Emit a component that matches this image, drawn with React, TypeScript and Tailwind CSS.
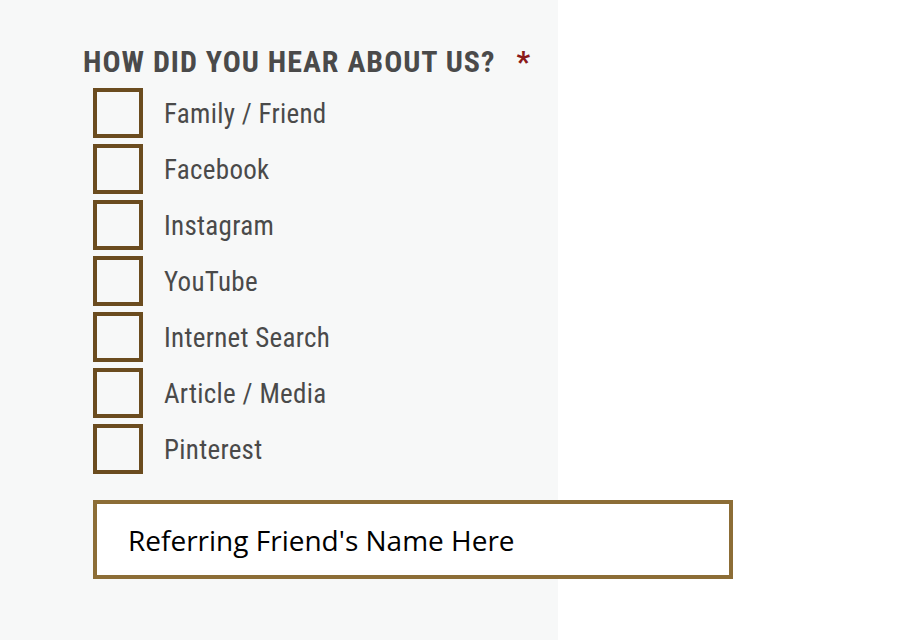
import React from "react";

const options = [
  "Family / Friend",
  "Facebook",
  "Instagram",
  "YouTube",
  "Internet Search",
  "Article / Media",
  "Pinterest",
];

export default function App() {
  return (
    <div className="flex h-[640px] w-[906px] bg-white">
      <div className="flex w-[558px] flex-col bg-[#f7f8f8] pl-[83px] pt-[44px]">
        <div
          className="flex items-center text-[30px] font-bold uppercase leading-[36px] tracking-[1px] text-[#4a4a4a] [font-stretch:75%]"
          style={{ fontFamily: '"Roboto Condensed", Roboto, sans-serif' }}
        >
          <span>How did you hear about us?</span>
          <span className="ml-[21px] text-[#8b1a1a]">*</span>
        </div>
        <div className="ml-[10px] mt-[8px] flex flex-col gap-[6px]">
          {options.map((o) => (
            <label key={o} className="flex items-center">
              <span className="box-border h-[50px] w-[50px] border-4 border-[#6b4c1f]" />
              <span
                className="ml-[21px] mt-[2px] text-[27px] tracking-[0.3px] text-[#4a4a4a] [font-stretch:75%]"
                style={{ fontFamily: '"Roboto Condensed", Roboto, sans-serif' }}
              >
                {o}
              </span>
            </label>
          ))}
        </div>
        <div className="ml-[10px] mt-[26px] flex h-[79px] w-[640px] items-center border-4 border-[#8c6d36] bg-white pl-[31px]">
          <span
            className="text-[28px] text-black"
            style={{ fontFamily: '"Source Sans Pro", "Open Sans", sans-serif' }}
          >
            Referring Friend's Name Here
          </span>
        </div>
      </div>
      <div className="flex-1" />
    </div>
  );
}
